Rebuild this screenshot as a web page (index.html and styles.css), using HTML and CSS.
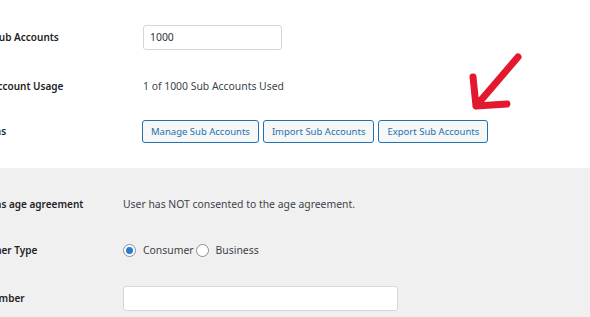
FILE: index.html
```html
<!DOCTYPE html>
<html lang="en">
  <head>
    <meta charset="UTF-8" />
    <meta name="viewport" content="width=device-width, initial-scale=1.0" />
    <title>Sub Accounts</title>
    <link rel="stylesheet" href="styles.css">
  </head>
  <body>
    <div class="page">
      <div class="section top">
        <div class="row row-1">
          <div class="label">Max Sub Accounts</div>
          <div class="value"><input class="text-input small" type="text" value="1000"></div>
        </div>
        <div class="row row-2">
          <div class="label">Sub Account Usage</div>
          <div class="value">1 of 1000 Sub Accounts Used</div>
        </div>
        <div class="row row-3">
          <div class="label">Actions</div>
          <div class="value buttons">
            <button class="button">Manage Sub Accounts</button>
            <button class="button">Import Sub Accounts</button>
            <button class="button">Export Sub Accounts</button>
          </div>
        </div>
      </div>

      <div class="section bottom">
        <div class="row row-4">
          <div class="label">User has age agreement</div>
          <div class="value">User has NOT consented to the age agreement.</div>
        </div>
        <div class="row row-5">
          <div class="label">Customer Type</div>
          <div class="value radios">
            <label class="radio"><span class="dot checked"></span>Consumer</label>
            <label class="radio"><span class="dot"></span>Business</label>
          </div>
        </div>
        <div class="row row-6">
          <div class="label">VAT Number</div>
          <div class="value"><input class="text-input wide" type="text" value=""></div>
        </div>
      </div>

      <svg class="arrow" width="70" height="70" viewBox="0 0 70 70">
        <path d="M58 12 L16 61 M13 32 L16 61 L47 59" fill="none" stroke="#e3172d" stroke-width="7" stroke-linecap="round" stroke-linejoin="round"/>
      </svg>
    </div>
  </body>
</html>
```

FILE: styles.css
```css
body {
  margin: 0;
  background: #ffffff;
  font-family: "Noto Sans", "Open Sans", sans-serif;
  font-size: 10.4px;
  color: #3c434a;
  overflow: hidden;
}

.page {
  position: relative;
  width: 590px;
  height: 317px;
  overflow: hidden;
}

.section {
  display: flex;
  flex-direction: column;
}

.section.top {
  background: #ffffff;
  height: 156px;
  padding-top: 12px;
}

.section.bottom {
  background: #f0f0f0;
  height: 137px;
  padding-top: 12px;
}

.row {
  flex: none;
  display: flex;
  align-items: center;
}

.row-1 { height: 50px; }
.row-2 { height: 48px; }
.row-3 { height: 42px; }
.row-4 { height: 48px; }
.row-5 { height: 44px; }
.row-6 { height: 52px; }

.label {
  flex: none;
  font-size: 10px;
  font-weight: 600;
  color: #1d2327;
  white-space: nowrap;
}

.top .label {
  width: 173px;
  margin-left: -30px;
}

.bottom .label {
  width: 159px;
  margin-left: -36px;
}

.value {
  display: flex;
  align-items: center;
  white-space: nowrap;
}

.text-input {
  box-sizing: border-box;
  height: 25px;
  border: 1px solid #d6d6d6;
  border-radius: 3px;
  background: #ffffff;
  font-family: inherit;
  font-size: 10.4px;
  color: #2c3338;
  padding: 0 6px;
}

.text-input.small { width: 139px; }
.text-input.wide { width: 275px; }

.buttons {
  gap: 4px;
  margin-left: -1px;
}

.button {
  box-sizing: border-box;
  height: 23px;
  padding: 0 8px;
  border: 1px solid #2271b1;
  border-radius: 3px;
  background: #f6f7f7;
  color: #2271b1;
  font-family: inherit;
  font-size: 9.5px;
}

.radios {
  gap: 2px;
}

.radio {
  display: flex;
  align-items: center;
  gap: 7px;
}

.dot {
  box-sizing: border-box;
  width: 13px;
  height: 13px;
  border: 1px solid #8c8f94;
  border-radius: 50%;
  background: #ffffff;
  display: flex;
  align-items: center;
  justify-content: center;
}

.dot.checked::after {
  content: "";
  width: 7px;
  height: 7px;
  border-radius: 50%;
  background: #2a7dd1;
}

.arrow {
  position: absolute;
  left: 460px;
  top: 45px;
}
```
